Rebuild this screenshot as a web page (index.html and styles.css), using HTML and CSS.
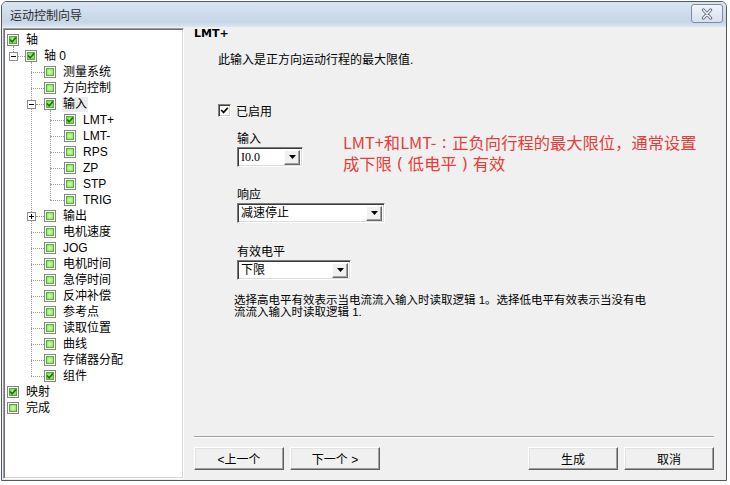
FILE: index.html
```html
<!DOCTYPE html>
<html lang="zh-CN">
<head>
    <meta charset="UTF-8">
    <meta name="viewport" content="width=device-width, initial-scale=1.0">
    <title>运动控制向导</title>
    <link rel="stylesheet" href="styles.css">
</head>
<body>
    <div class="window">
        <div class="titlebar">
            <span class="title">运动控制向导</span>
            <button class="close" type="button">
                <svg width="18" height="12" viewBox="0 0 18 12">
                    <path d="M5.5 2 L12.5 10 M12.5 2 L5.5 10" stroke="#6b7888" stroke-width="3.4" stroke-linecap="round" fill="none"/>
                    <path d="M5.5 2 L12.5 10 M12.5 2 L5.5 10" stroke="#f4f7fa" stroke-width="1.3" stroke-linecap="round" fill="none"/>
                </svg>
            </button>
        </div>

        <div class="main">
            <!-- wizard steps -->
            <div class="tree">
                <div class="row lv0"><span class="cb on"><i><svg viewBox="0 0 8 8"><path d="M1 3.5 L3.2 5.8 L7 1.5"/></svg></i></span><span class="lbl">轴</span></div>
                <div class="kids k0">
                    <div class="row lv1"><span class="branch"><span class="exp minus"></span><span class="hline"></span></span><span class="cb on"><i><svg viewBox="0 0 8 8"><path d="M1 3.5 L3.2 5.8 L7 1.5"/></svg></i></span><span class="lbl">轴 0</span></div>
                    <div class="kids k1">
                        <div class="row lv2"><span class="branch"><span class="hline"></span></span><span class="cb"><i></i></span><span class="lbl">测量系统</span></div>
                        <div class="row lv2"><span class="branch"><span class="hline"></span></span><span class="cb"><i></i></span><span class="lbl">方向控制</span></div>
                        <div class="row lv2"><span class="branch"><span class="exp minus"></span><span class="hline"></span></span><span class="cb on"><i><svg viewBox="0 0 8 8"><path d="M1 3.5 L3.2 5.8 L7 1.5"/></svg></i></span><span class="lbl sel">输入</span></div>
                        <div class="kids k2">
                            <div class="row lv3"><span class="branch"><span class="hline"></span></span><span class="cb on"><i><svg viewBox="0 0 8 8"><path d="M1 3.5 L3.2 5.8 L7 1.5"/></svg></i></span><span class="lbl">LMT+</span></div>
                            <div class="row lv3"><span class="branch"><span class="hline"></span></span><span class="cb"><i></i></span><span class="lbl">LMT-</span></div>
                            <div class="row lv3"><span class="branch"><span class="hline"></span></span><span class="cb"><i></i></span><span class="lbl">RPS</span></div>
                            <div class="row lv3"><span class="branch"><span class="hline"></span></span><span class="cb"><i></i></span><span class="lbl">ZP</span></div>
                            <div class="row lv3"><span class="branch"><span class="hline"></span></span><span class="cb"><i></i></span><span class="lbl">STP</span></div>
                            <div class="row lv3"><span class="branch"><span class="hline"></span></span><span class="cb"><i></i></span><span class="lbl">TRIG</span></div>
                        </div>
                        <div class="row lv2"><span class="branch"><span class="exp plus"></span><span class="hline"></span></span><span class="cb"><i></i></span><span class="lbl">输出</span></div>
                        <div class="row lv2"><span class="branch"><span class="hline"></span></span><span class="cb"><i></i></span><span class="lbl">电机速度</span></div>
                        <div class="row lv2"><span class="branch"><span class="hline"></span></span><span class="cb"><i></i></span><span class="lbl">JOG</span></div>
                        <div class="row lv2"><span class="branch"><span class="hline"></span></span><span class="cb"><i></i></span><span class="lbl">电机时间</span></div>
                        <div class="row lv2"><span class="branch"><span class="hline"></span></span><span class="cb"><i></i></span><span class="lbl">急停时间</span></div>
                        <div class="row lv2"><span class="branch"><span class="hline"></span></span><span class="cb"><i></i></span><span class="lbl">反冲补偿</span></div>
                        <div class="row lv2"><span class="branch"><span class="hline"></span></span><span class="cb"><i></i></span><span class="lbl">参考点</span></div>
                        <div class="row lv2"><span class="branch"><span class="hline"></span></span><span class="cb"><i></i></span><span class="lbl">读取位置</span></div>
                        <div class="row lv2"><span class="branch"><span class="hline"></span></span><span class="cb"><i></i></span><span class="lbl">曲线</span></div>
                        <div class="row lv2"><span class="branch"><span class="hline"></span></span><span class="cb"><i></i></span><span class="lbl">存储器分配</span></div>
                        <div class="row lv2"><span class="branch"><span class="hline"></span></span><span class="cb on"><i><svg viewBox="0 0 8 8"><path d="M1 3.5 L3.2 5.8 L7 1.5"/></svg></i></span><span class="lbl">组件</span></div>
                    </div>
                </div>
                <div class="row lv0"><span class="cb on"><i><svg viewBox="0 0 8 8"><path d="M1 3.5 L3.2 5.8 L7 1.5"/></svg></i></span><span class="lbl">映射</span></div>
                <div class="row lv0"><span class="cb"><i></i></span><span class="lbl">完成</span></div>
            </div>

            <!-- settings page -->
            <div class="pane">
                <div class="head">LMT+</div>
                <p class="intro">此输入是正方向运动行程的最大限值.</p>

                <div class="enable">
                    <span class="chk"><svg width="9" height="9" viewBox="0 0 9 9"><path d="M1.2 4 L3.5 6.4 L7.8 1.8" stroke="#111" stroke-width="1.7" fill="none"/></svg></span>
                    <span>已启用</span>
                </div>

                <div class="fields">
                    <div class="field-row">
                        <div class="field f1">
                            <div class="flabel">输入</div>
                            <div class="select w66">
                                <span class="val mono">I0.0</span>
                                <span class="drop"><svg width="7" height="4" viewBox="0 0 7 4"><path d="M0 0 H7 L3.5 4 Z" fill="#000"/></svg></span>
                            </div>
                        </div>
                        <div class="note">
                            <div>LMT+和LMT-<span class="punct">:</span>正负向行程的最大限位，通常设置</div>
                            <div>成下限<span class="punct">(</span>低电平<span class="punct">)</span>有效</div>
                        </div>
                    </div>

                    <div class="field f2">
                        <div class="flabel">响应</div>
                        <div class="select w148">
                            <span class="val">减速停止</span>
                            <span class="drop"><svg width="7" height="4" viewBox="0 0 7 4"><path d="M0 0 H7 L3.5 4 Z" fill="#000"/></svg></span>
                        </div>
                    </div>

                    <div class="field f3">
                        <div class="flabel">有效电平</div>
                        <div class="select w114">
                            <span class="val">下限</span>
                            <span class="drop"><svg width="7" height="4" viewBox="0 0 7 4"><path d="M0 0 H7 L3.5 4 Z" fill="#000"/></svg></span>
                        </div>
                    </div>
                </div>

                <p class="desc">选择高电平有效表示当电流流入输入时读取逻辑 1。选择低电平有效表示当没有电<br>流流入输入时读取逻辑 1.</p>

                <div class="spacer"></div>
                <div class="sep"></div>

                <div class="buttons">
                    <div class="group">
                        <button class="btn" type="button">&lt;上一个</button>
                        <button class="btn" type="button">下一个 &gt;</button>
                    </div>
                    <div class="group">
                        <button class="btn" type="button">生成</button>
                        <button class="btn" type="button">取消</button>
                    </div>
                </div>
            </div>
        </div>
    </div>
</body>
</html>
```

FILE: styles.css
```css
/* General */
* {
    margin: 0;
    padding: 0;
    box-sizing: border-box;
}

body {
    background-color: #ffffff;
    font-family: "Liberation Sans", "Noto Sans CJK SC", sans-serif;
    font-size: 12px;
    color: #000;
}

/* Window frame */
.window {
    width: 726px;
    height: 480px;
    margin: 1px 0 0 1px;
    border: 1px solid #4f5a66;
    border-radius: 6px 6px 0 0;
    background-color: #f0f0f0;
    display: flex;
    flex-direction: column;
    overflow: hidden;
}

.titlebar {
    height: 25px;
    flex: none;
    display: flex;
    align-items: flex-start;
    justify-content: space-between;
    background: linear-gradient(#d9e4f1, #c6d6e8 80%, #dbe6f2);
}

.title {
    margin: 5px 0 0 8px;
    line-height: 16px;
    color: #2b2b2b;
    font-family: "Noto Sans CJK SC", sans-serif;
}

.close {
    width: 32px;
    height: 19px;
    margin: 2px 3px 0 0;
    border: 1px solid #7c8ca0;
    border-radius: 3px;
    background: linear-gradient(#f1f5fa, #d6e1ec);
    display: flex;
    align-items: center;
    justify-content: center;
}

.main {
    flex: 1;
    display: flex;
    min-height: 0;
}

/* Step tree */
.tree {
    width: 181px;
    margin: 1px 0 1px 1px;
    padding-top: 3px;
    background-color: #ffffff;
    border: 1px solid;
    border-color: #a0a0a0 #ffffff #ffffff #a0a0a0;
    box-shadow: inset 1px 1px 0 #6f6f6f, inset -1px -1px 0 #d8d8d8;
}

.kids {
    position: relative;
}

.kids::before {
    content: "";
    position: absolute;
    top: -2px;
    border-left: 1px dotted #9a9a9a;
}

.k0::before { left: 9px;  height: 10px; }
.k1::before { left: 27px; bottom: 8px; }
.k2::before { left: 46px; bottom: 8px; }

.row {
    height: 16px;
    display: flex;
    align-items: center;
}

.lv0 { padding-left: 3px; }
.lv1 { padding-left: 9px; }
.lv2 { padding-left: 27px; }
.lv3 { padding-left: 46px; }

.branch {
    display: flex;
    align-items: center;
    height: 16px;
}

.lv1 .branch { width: 12px; }
.lv2 .branch { width: 13px; }
.lv3 .branch { width: 14px; }

.hline {
    flex: 1;
    height: 0;
    border-top: 1px dotted #9a9a9a;
}

.exp {
    position: relative;
    width: 9px;
    height: 9px;
    margin-left: -4px;
    flex: none;
    border: 1px solid #8e8e8e;
    background-color: #ffffff;
}

.exp::before,
.exp::after {
    content: "";
    position: absolute;
    background-color: #000;
}

.exp::before {
    left: 1px;
    top: 3px;
    width: 5px;
    height: 1px;
}

.plus::after {
    left: 3px;
    top: 1px;
    width: 1px;
    height: 5px;
}

.cb {
    width: 12px;
    height: 12px;
    flex: none;
    padding: 1px;
    border: 1px solid #858585;
    background-color: #ffffff;
    display: flex;
}

.cb i {
    flex: 1;
    border: 1px solid #55b236;
    background: radial-gradient(circle, #c9f8a2 20%, #86dc5e 100%);
    display: flex;
}

.cb.on i {
    background: radial-gradient(circle, #a9ee7e 20%, #6fcf48 100%);
}

.cb svg {
    width: 8px;
    height: 8px;
    margin: -1px;
    overflow: visible;
}

.cb svg path {
    fill: none;
    stroke: #1f6e14;
    stroke-width: 1.7;
}

.lbl {
    margin-left: 6px;
    padding: 0 1px;
    line-height: 15px;
    white-space: nowrap;
}

.lbl.sel {
    background-color: #ececec;
}

/* Right page */
.pane {
    flex: 1;
    display: flex;
    flex-direction: column;
    padding: 0 12px 10px 10px;
}

.head {
    line-height: 14px;
    font-size: 11px;
    font-weight: bold;
    font-family: "DejaVu Sans", sans-serif;
}

.intro {
    margin: 12px 0 0 24px;
    line-height: 14px;
}

.enable {
    margin: 36px 0 0 24px;
    height: 14px;
    display: flex;
    align-items: center;
    gap: 5px;
}

.chk {
    width: 13px;
    height: 13px;
    border: 1px solid;
    border-color: #808080 #ffffff #ffffff #808080;
    box-shadow: inset 1px 1px 0 #404040, inset -1px -1px 0 #d4d0c8;
    background-color: #ffffff;
    display: flex;
    align-items: center;
    justify-content: center;
}

.fields {
    margin: 15px 0 0 43px;
}

.field-row {
    display: flex;
}

.f1 {
    width: 106px;
}

.f2 { margin-top: 14px; }
.f3 { margin-top: 22px; }

.flabel {
    line-height: 14px;
}

.select {
    margin-top: 1px;
    height: 20px;
    display: flex;
    align-items: center;
    justify-content: space-between;
    padding: 0 2px 0 3px;
    background-color: #ffffff;
    border: 1px solid;
    border-color: #7a7a7a #ffffff #ffffff #7a7a7a;
    box-shadow: inset 1px 1px 0 #3c3c3c, inset -1px -1px 0 #dcdcdc;
}

.w66 { width: 66px; }
.w148 { width: 148px; }
.w114 { width: 114px; }

.val {
    line-height: 14px;
}

.mono {
    font-family: "Liberation Serif", serif;
}

.drop {
    width: 16px;
    height: 15px;
    display: flex;
    align-items: center;
    justify-content: center;
    background-color: #f0f0f0;
    border: 1px solid;
    border-color: #ffffff #6a6a6a #6a6a6a #ffffff;
    box-shadow: inset -1px -1px 0 #a0a0a0;
}

.note {
    font-family: "Noto Sans CJK SC", sans-serif;
    font-size: 16.3px;
    line-height: 21px;
    color: #ea3b36;
    white-space: nowrap;
}

.note div {
    height: 21px;
}

/* full-width punctuation, centred in its cell */
.note .punct {
    display: inline-block;
    width: 16px;
    text-align: center;
    vertical-align: top;
    font-family: "Noto Sans", sans-serif;
}

.desc {
    margin: 14px 0 0 40px;
    font-size: 11.5px;
    line-height: 12px;
    white-space: nowrap;
}

.spacer {
    flex: 1;
}

.sep {
    border-top: 1px solid #a0a0a0;
    border-bottom: 1px solid #ffffff;
    margin-bottom: 9px;
}

.buttons {
    display: flex;
    justify-content: space-between;
}

.group {
    display: flex;
    gap: 6px;
}

.btn {
    width: 90px;
    height: 23px;
    font-family: "Liberation Sans", "Noto Sans CJK SC", sans-serif;
    font-size: 12px;
    color: #000;
    background-color: #f0f0f0;
    border: 1px solid;
    border-color: #ffffff #5e5e5e #5e5e5e #ffffff;
    box-shadow: inset -1px -1px 0 #a0a0a0, inset 1px 1px 0 #e3e3e3;
    cursor: pointer;
}
```
